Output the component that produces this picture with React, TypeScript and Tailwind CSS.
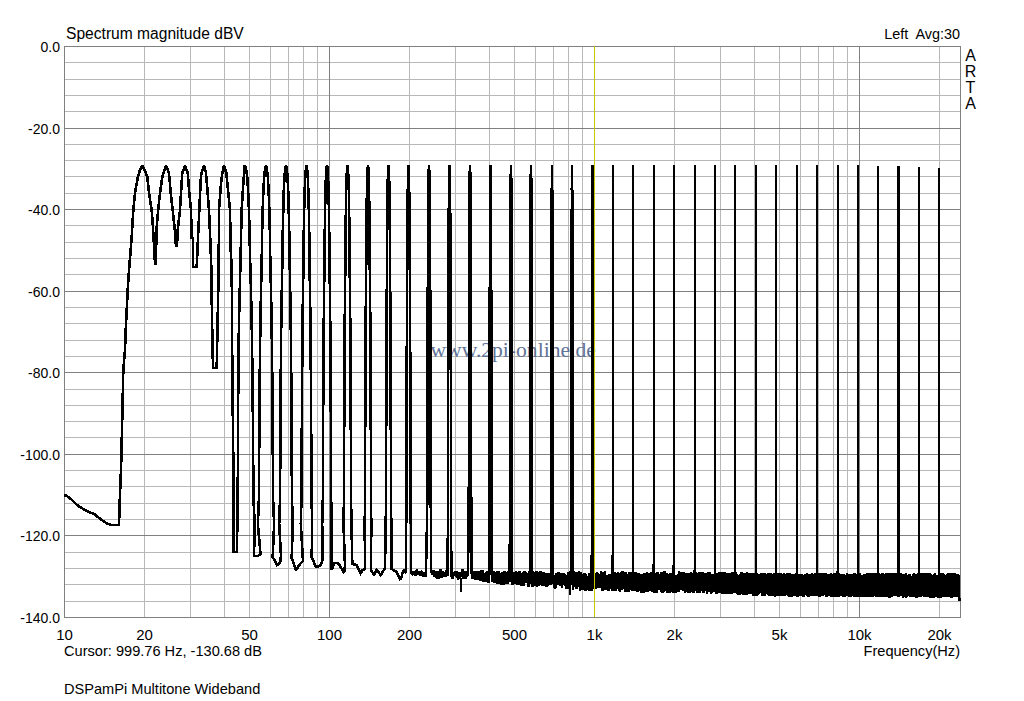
import React from "react";

const SANS = "font-['Liberation_Sans',Arial,sans-serif]";

const lerp = (table: number[][], v: number) => {
  if (v <= table[0][0]) return table[0][1];
  for (let i = 1; i < table.length; i++) {
    if (v <= table[i][0]) {
      const [a, b] = table[i - 1];
      const [c, d] = table[i];
      return b + ((d - b) * (v - a)) / (c - a);
    }
  }
  return table[table.length - 1][1];
};

const HW = [[165, 0], [167, 1.5], [175, 5], [190, 7.5], [209, 9.5], [230, 11], [250, 12], [270, 13], [290, 14.5], [330, 16.5], [370, 18], [430, 19.5], [497, 20.5], [524, 23.5], [600, 26]];
const CENTER = [[400, 573], [460, 574.5], [500, 578], [600, 581.5], [700, 582.5], [780, 585], [960, 585.5]];
const AMP = [[400, 3], [460, 5], [500, 7], [600, 10], [700, 10.5], [780, 11.5], [960, 12]];
const DENS = [[400, 0.6], [500, 1.4], [600, 2.5], [800, 5]];

const HEAD: number[][] = [
  [64, 495], [67, 496], [72, 500], [76, 504], [80, 507], [85, 510], [89, 512], [94, 514], [98, 517], [103, 521], [108, 524], [112, 525], [119, 525], [120, 494], [121, 470],
  [122, 430], [123.3, 370], [125, 350], [125.7, 330], [126.7, 310], [127.7, 290], [129, 270], [130.7, 250], [131.7, 237], [133.3, 210], [135, 193], [137.7, 178], [140, 170], [142.3, 165.7],
  [145, 170.7], [147.3, 176.7], [149, 193], [151.7, 210], [152.7, 223], [154.3, 250], [155, 264], [155.7, 264], [156.7, 227], [158.3, 209], [160, 193], [162.3, 177], [166, 165.7],
  [169, 173], [170.7, 193], [172.7, 210], [175, 232], [176, 246], [177, 246], [177.7, 230], [180, 210], [181, 193], [182.3, 173], [185, 165.7],
  [187.7, 173], [189.3, 193], [191, 210], [191.7, 238], [193, 238], [193, 267], [196.7, 267], [198, 238], [199.3, 210], [201, 175], [204, 165.7],
  [206, 173], [207.7, 193], [209, 210], [210.3, 240], [211.3, 268], [212, 318], [213, 368], [216.7, 368], [217.7, 318], [218.7, 268], [219, 210], [220.7, 187], [222, 175], [224, 165.7],
  [226.3, 173], [228.3, 193], [230, 210], [230.7, 250], [231.7, 268], [232.3, 370], [233.3, 460], [233.7, 552], [237, 552], [238, 460], [238.3, 370], [239, 320], [240.3, 268], [241.7, 209], [243.3, 183], [244.7, 165.7],
];

const VALLEYS: number[][][] = [
  [[254, 556], [258, 556], [260.5, 554]],
  [[272.7, 557], [277, 565], [280, 563], [281, 556]],
  [[291.7, 558], [296, 570], [300, 564], [303, 561]],
  [[311.7, 557], [316, 567], [320, 566], [322.7, 560]],
  [[331.7, 570], [334, 563], [338, 563], [340.7, 567], [344, 573], [345, 566]],
  [[352.3, 564], [356.7, 565], [360.7, 573], [362.7, 570], [365, 569]],
  [[371, 570], [374, 575], [376.7, 570], [380.7, 575], [385, 568]],
  [[391.7, 569], [396.7, 572], [400.7, 580], [403.3, 570], [406, 573]],
];

const PEAKS = [245, 266, 286, 306.5, 327, 347.5, 368, 388.5, 408.5, 429, 449.5, 470, 490.5, 511, 531, 552, 572, 592.5, 613, 633, 654, 674, 695, 715, 735, 756, 776, 797, 817, 838, 858, 878, 898.5, 919, 939];

function buildTrace() {
  let seed = 12345;
  const rnd = () => {
    seed = (seed * 1664525 + 1013904223) >>> 0;
    return seed / 4294967296;
  };
  const pts: number[][] = [...HEAD];
  const scale = (xp: number) => (xp > 600 ? 0 : Math.pow(10, -(xp - 143) / 265));
  const wall = (xp: number, bottom: number, side: number, top: number) => {
    const s = scale(xp);
    const ys = HW.map((h) => h[0]).filter((y) => y > top && y < bottom);
    const list = ys.map((y) => [xp + side * lerp(HW, y) * s, y]);
    return side > 0 ? list : list.reverse();
  };
  const topOf = (i: number) => {
    const x = PEAKS[i];
    return x > 920 ? 168 : x > 900 ? 167 : x > 870 ? 166 : 165;
  };
  const noise = (from: number, to: number) => {
    let x = from;
    let up = true;
    while (x < to) {
      const c = lerp(CENTER, x);
      const a = lerp(AMP, x);
      const f = x < 480 ? 0.2 + rnd() * 0.9 : x < 720 ? 0.45 + rnd() * 0.6 : 0.68 + rnd() * 0.36;
      pts.push([x, c + (up ? -1 : 1) * a * f]);
      up = !up;
      x += 1 / lerp(DENS, x);
    }
  };
  PEAKS.forEach((xp, i) => {
    const top = topOf(i);
    pts.push([xp, top]);
    const valley = VALLEYS[i];
    const nextXp = PEAKS[i + 1];
    if (valley) {
      wall(xp, valley[0][1], 1, top).forEach((p) => pts.push(p));
      valley.forEach((p) => pts.push(p));
      wall(nextXp, valley[valley.length - 1][1], -1, topOf(i + 1)).forEach((p) => pts.push(p));
    } else {
      const fy = lerp(CENTER, xp + 1);
      wall(xp, fy, 1, top).forEach((p) => pts.push(p));
      const startX = xp + lerp(HW, fy) * scale(xp);
      if (nextXp) {
        const endX = nextXp - lerp(HW, fy) * scale(nextXp);
        noise(startX, endX);
        wall(nextXp, fy, -1, topOf(i + 1)).forEach((p) => pts.push(p));
      } else {
        noise(startX, 959);
        pts.push([959.5, 601]);
      }
    }
  });
  return pts.map((p) => `${p[0].toFixed(1)},${p[1].toFixed(1)}`).join(" ");
}

const TRACE = buildTrace();
const SPIKES = [[461, 578, 592], [570, 582, 595]];

const xOf = (f: number) => Math.round(64 + 265 * Math.log10(f / 10)) + 0.5;

const vLines: { x: number; major: boolean }[] = [];
[10, 100, 1000, 10000].forEach((d) => {
  for (let n = 1; n < 10; n++) {
    const f = d * n;
    if (f > 24000) continue;
    vLines.push({ x: xOf(f), major: n === 1 });
  }
});
const hLines = Array.from({ length: 36 }, (_, i) => ({
  y: Math.round(46 + 16.31 * i) + 0.5,
  major: i % 5 === 0,
}));

const YLABELS = ["0.0", "-20.0", "-40.0", "-60.0", "-80.0", "-100.0", "-120.0", "-140.0"];
const XLABELS: [string, number][] = [["10", 10], ["20", 20], ["50", 50], ["100", 100], ["200", 200], ["500", 500], ["1k", 1000], ["2k", 2000], ["5k", 5000], ["10k", 10000], ["20k", 20000]];

export default function App() {
  return (
    <div className={`w-[1024px] h-[701px] bg-white text-black text-[14px] leading-[16px] overflow-hidden ${SANS}`}>
      <div className="ml-[66px] mr-[64px] pt-[26px] h-[46px] flex justify-between items-start whitespace-pre">
        <span className="text-[15.6px]">Spectrum magnitude dBV</span>
        <span className="text-[14.4px]">Left  Avg:30</span>
      </div>
      <div className="flex items-start">
        <div className="w-[60px] h-[587px] -mt-[7px] flex flex-col justify-between items-end">
          {YLABELS.map((l) => (
            <span key={l} className="h-[16px]">{l}</span>
          ))}
        </div>
        <svg
          className="ml-[4px] w-[897px] h-[572px] shrink-0 block"
          viewBox="64 46 897 572"
        >
          <g shapeRendering="crispEdges" strokeWidth={1}>
            {vLines.filter((l) => !l.major).map((l) => (
              <line key={l.x} x1={l.x} x2={l.x} y1={46} y2={618} stroke="#b8b8b8" />
            ))}
            {hLines.filter((l) => !l.major).map((l) => (
              <line key={l.y} x1={64} x2={961} y1={l.y} y2={l.y} stroke="#b8b8b8" />
            ))}
            {vLines.filter((l) => l.major).map((l) => (
              <line key={l.x} x1={l.x} x2={l.x} y1={46} y2={618} stroke="#808080" />
            ))}
            {hLines.filter((l) => l.major).map((l) => (
              <line key={l.y} x1={64} x2={961} y1={l.y} y2={l.y} stroke="#808080" />
            ))}
            <line x1={960.5} x2={960.5} y1={46} y2={618} stroke="#808080" />
          </g>
          <text
            x={430.5}
            y={357}
            fontFamily="'Liberation Serif','Times New Roman',serif"
            fontSize={21.6}
            fill="#5f7396"
          >
            www.2pi-online.de
          </text>
          <polyline
            points={TRACE}
            fill="none"
            stroke="#000"
            strokeWidth={2.6}
            strokeLinejoin="miter"
            strokeMiterlimit={2}
            shapeRendering="crispEdges"
          />
          {SPIKES.map(([x, a, b]) => (
            <line key={x} x1={x} x2={x} y1={a} y2={b} stroke="#000" strokeWidth={2} shapeRendering="crispEdges" />
          ))}
          <line x1={594.5} x2={594.5} y1={46} y2={617} stroke="#c8c800" strokeWidth={1} shapeRendering="crispEdges" />
        </svg>
        <div className="ml-[4px] mt-[2px] w-[11px] flex flex-col items-center text-[16px] leading-[16px]">
          <span>A</span>
          <span>R</span>
          <span>T</span>
          <span>A</span>
        </div>
      </div>
      <div className="relative h-[16px] mt-[1px] text-[15px]">
        {XLABELS.map(([l, f]) => (
          <span
            key={l}
            className="absolute top-0 -translate-x-1/2"
            style={{ left: xOf(f) }}
          >
            {l}
          </span>
        ))}
      </div>
      <div className="ml-[64px] mr-[64px] flex justify-between text-[14.6px]">
        <span>Cursor: 999.76 Hz, -130.68 dB</span>
        <span>Frequency(Hz)</span>
      </div>
      <div className="ml-[64px] mt-[22px] text-[14.6px]">DSPamPi Multitone Wideband</div>
    </div>
  );
}
